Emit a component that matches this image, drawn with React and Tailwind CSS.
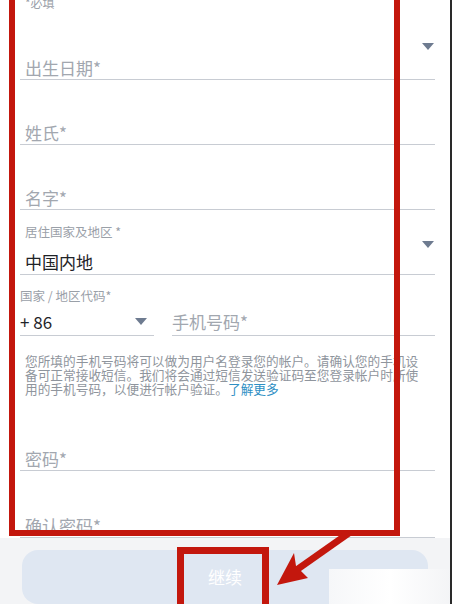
import React from 'react';

const FONT = { fontFamily: '"Noto Sans CJK SC", "Noto Sans", sans-serif' };

function Caret({ className }) {
  return (
    <svg width="12" height="8" viewBox="0 0 12 8" className={className}>
      <path d="M0 0 L12 0 L6 7 Z" fill="#6e7b90" />
    </svg>
  );
}

function Field({ height, children, className = '' }) {
  return (
    <div className={`relative flex flex-col justify-end border-b border-[#c8ccd3] ${className}`} style={{ height }}>
      {children}
    </div>
  );
}

export default function App() {
  return (
    <div className="relative w-[452px] h-[604px] overflow-hidden bg-white border-r-2 border-[#2a2a2a]" style={FONT}>
      <div className="pl-[20px] pr-[15px]">
        {/* birthday */}
        <Field height={80}>
          <div className="absolute left-[5px] -top-[4px] text-[12px] leading-[14px] text-[#9aa0a8]">*必填</div>
          <Caret className="absolute right-[1px] top-[43px]" />
          <div className="pl-[5px] pb-[1px] text-[17px] leading-[20px] text-[#a2a7af]">出生日期*</div>
        </Field>

        <Field height={65}>
          <div className="pl-[5px] pb-[1px] text-[17px] leading-[20px] text-[#a2a7af]">姓氏*</div>
        </Field>

        <Field height={65}>
          <div className="pl-[5px] pb-[1px] text-[17px] leading-[20px] text-[#a2a7af]">名字*</div>
        </Field>

        <Field height={65}>
          <div className="pl-[5px] text-[12.5px] leading-[16px] text-[#9aa0a8]">居住国家及地区 *</div>
          <Caret className="absolute right-[1px] top-[31px]" />
          <div className="pl-[5px] pt-[12px] pb-[2px] text-[17px] leading-[20px] text-[#1f2328]">中国内地</div>
        </Field>

        {/* phone */}
        <div className="flex gap-[18px]">
          <div className="w-[134px]">
            <div className="h-[61px] flex flex-col justify-end border-b border-[#c8ccd3]">
              <div className="text-[12.5px] leading-[16px] text-[#9aa0a8]">国家 / 地区代码*</div>
              <div className="flex items-center justify-between pt-[8px] pb-[3px] pr-[7px]">
                <span className="text-[17px] leading-[20px] text-[#1f2328]">+ 86</span>
                <Caret />
              </div>
            </div>
          </div>
          <div className="flex-1 h-[61px] flex flex-col justify-end border-b border-[#c8ccd3]">
            <div className="pb-[3px] text-[17px] leading-[20px] text-[#a2a7af]">手机号码*</div>
          </div>
        </div>

        <div className="pl-[5px] mt-[18px] text-[12.7px] leading-[14px] text-[#8f959d] whitespace-nowrap">
          <div>您所填的手机号码将可以做为用户名登录您的帐户。请确认您的手机设</div>
          <div>备可正常接收短信。我们将会通过短信发送验证码至您登录帐户时所使</div>
          <div>用的手机号码，以便进行帐户验证。<span className="text-[#2e8fc4]">了解更多</span></div>
        </div>

        <Field height={75}>
          <div className="pl-[5px] pb-[1px] text-[17px] leading-[20px] text-[#a2a7af]">密码*</div>
        </Field>

        <Field height={67}>
          <div className="pl-[5px] pb-[1px] text-[17px] leading-[20px] text-[#a2a7af]">确认密码*</div>
        </Field>
      </div>

      {/* footer */}
      <div className="bg-[#f3f4f6] h-[70px] pt-[12px] px-[22px]">
        <div className="h-[54px] rounded-[16px] bg-[#dfe7f2] flex items-center justify-center text-[17px] text-white">
          继续
        </div>
      </div>

      {/* annotations */}
      <div className="absolute left-[9px] top-[-10px] w-[391px] h-[546px] border-[6px] border-[#c3170d]" />
      <div className="absolute left-[177px] top-[547px] w-[92px] h-[70px] border-[7px] border-[#c3170d]" />
      <svg className="absolute left-0 top-0 pointer-events-none" width="452" height="604">
        <line x1="349" y1="533" x2="295" y2="571" stroke="#c3170d" strokeWidth="7" />
        <polygon points="277,585 294,553 296,566 308,578" fill="#c3170d" />
      </svg>
      <div className="absolute left-[329px] top-[569px] w-[123px] h-[35px] bg-gradient-to-r from-[#f6f7f9] via-white to-[#f3f4f6]" />
    </div>
  );
}
